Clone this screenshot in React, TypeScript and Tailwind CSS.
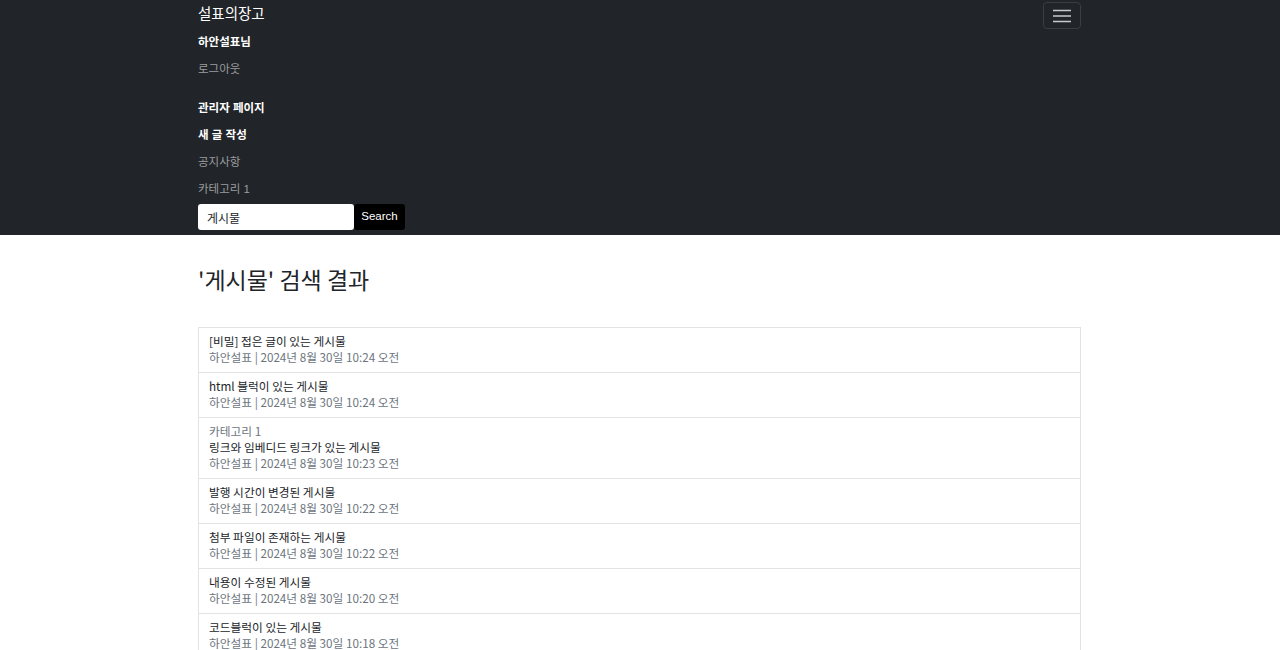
import React from "react";

interface Post {
  title: string;
  date: string;
  category?: string;
}

const posts: Post[] = [
  { title: "[비밀] 접은 글이 있는 게시물", date: "2024년 8월 30일 10:24 오전" },
  { title: "html 블럭이 있는 게시물", date: "2024년 8월 30일 10:24 오전" },
  { title: "링크와 임베디드 링크가 있는 게시물", date: "2024년 8월 30일 10:23 오전", category: "카테고리 1" },
  { title: "발행 시간이 변경된 게시물", date: "2024년 8월 30일 10:22 오전" },
  { title: "첨부 파일이 존재하는 게시물", date: "2024년 8월 30일 10:22 오전" },
  { title: "내용이 수정된 게시물", date: "2024년 8월 30일 10:20 오전" },
  { title: "코드블럭이 있는 게시물", date: "2024년 8월 30일 10:18 오전" },
  { title: "이미지가 있는 게시물", date: "2024년 8월 30일 10:17 오전" },
];

const font = "font-['Liberation_Sans','Noto_Sans_CJK_KR',sans-serif]";
const krFont = "font-['Noto_Sans_CJK_KR',sans-serif]";

export default function App() {
  return (
    <div className={`h-[650px] overflow-hidden bg-white ${font}`}>
      {/* Navbar */}
      <nav className="bg-[#212529] pb-[5px]">
        <div className="w-[884px] mx-auto">
          <div className="flex items-center justify-between h-[29px]">
            <span className="text-white text-[14.5px]">설표의장고</span>
            <button className="w-[38px] h-[27px] mt-[2px] mr-[1px] border border-[#3a3e43] rounded-[4px] flex items-center justify-center">
              <svg width="20" height="14" viewBox="0 0 20 14">
                <path d="M1 1.5h18M1 7h18M1 12.5h18" stroke="#c8c9cb" strokeWidth="1.3" />
              </svg>
            </button>
          </div>
          <ul className="text-[11.5px]">
            <li className="h-[27px] flex items-center text-white font-bold">하안설표님</li>
            <li className="h-[27px] flex items-center text-[#9a9c9f]">로그아웃</li>
            <li className="h-[27px] mt-[12px] flex items-center text-white font-bold">관리자 페이지</li>
            <li className="h-[27px] flex items-center text-white font-bold">새 글 작성</li>
            <li className="h-[27px] flex items-center text-[#9a9c9f]">공지사항</li>
            <li className="h-[27px] flex items-center text-[#9a9c9f]">카테고리 1</li>
          </ul>
          <form className="flex mt-[1px]">
            <input
              defaultValue="게시물"
              className="w-[156px] h-[26px] bg-white rounded-[3px] px-[9px] text-[12px] text-[#212529] outline-none"
            />
            <button type="button" className="w-[51px] h-[26px] bg-black text-white text-[11.5px] rounded-[3px]">
              Search
            </button>
          </form>
        </div>
      </nav>

      {/* Content */}
      <main className={`w-[884px] mx-auto ${krFont}`}>
        <h1 className="text-[23px] text-[#212529] mt-[28px] leading-[32px]">'게시물' 검색 결과</h1>
        <div className="w-[883px] mt-[32px] border border-[#e3e3e3] divide-y divide-[#e3e3e3]">
          {posts.map((p) => (
            <div key={p.title} className="px-[10px] pt-[5px] pb-[7px] text-[11.7px] leading-[16px]">
              {p.category && <div className="text-[#6c757d]">{p.category}</div>}
              <div className="text-[#212529]">{p.title}</div>
              <div className="text-[#6c757d]">하안설표 | {p.date}</div>
            </div>
          ))}
        </div>
      </main>
    </div>
  );
}
